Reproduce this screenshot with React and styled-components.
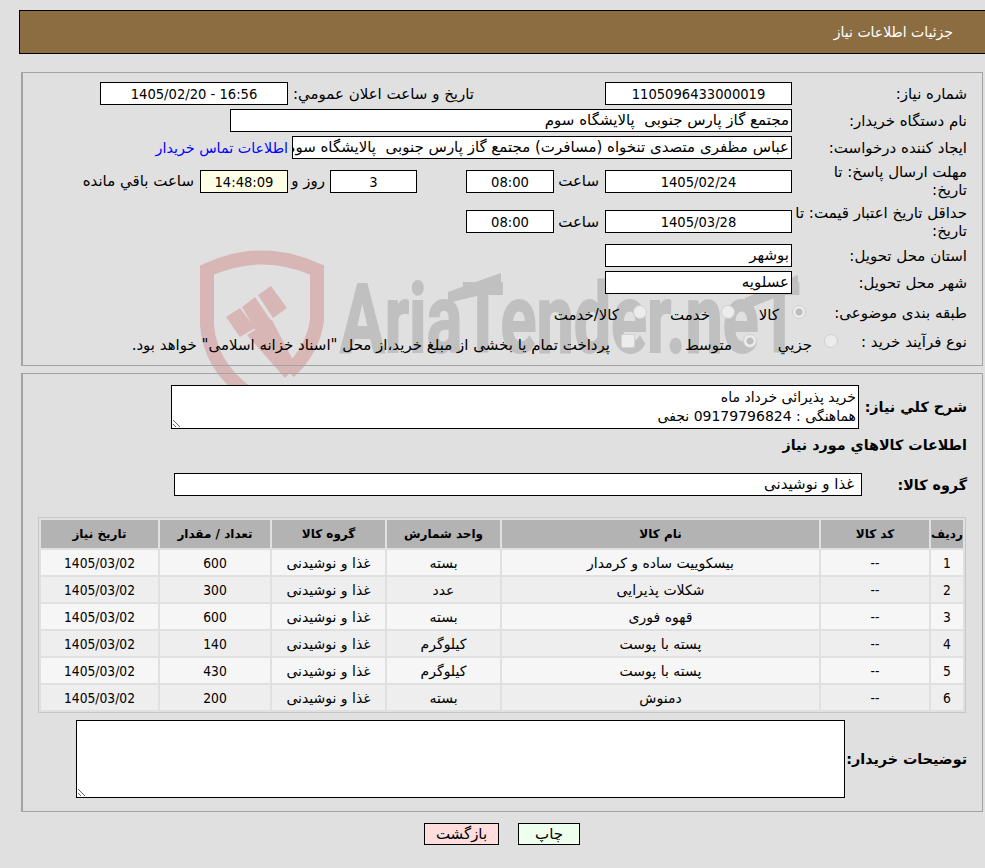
import React from 'react';
import styled, { createGlobalStyle } from 'styled-components';

const GlobalStyle = createGlobalStyle`
  html, body {
    margin: 0;
    padding: 0;
    background: #e0e0e0;
  }
  body {
    font-family: "DejaVu Sans", Tahoma, sans-serif;
    font-size: 15px;
    color: #000;
  }
`;

const Page = styled.div`
  position: relative;
  width: 985px;
  height: 868px;
  overflow: hidden;
  direction: rtl;
  padding-top: 10px;
  box-sizing: border-box;
`;

const Watermark = styled.svg`
  position: absolute;
  left: 190px;
  top: 240px;
  z-index: 0;
`;

const Header = styled.div`
  position: relative;
  z-index: 1;
  box-sizing: border-box;
  width: 970px;
  height: 44px;
  margin-right: -4px;
  padding-right: 35px;
  display: flex;
  align-items: center;
  background: #8c6d42;
  border: 1px solid #000;
  color: #fff;
  font-size: 14px;
`;

const Panel = styled.div`
  position: relative;
  z-index: 1;
  box-sizing: border-box;
  width: 962px;
  margin-right: 2px;
  margin-top: ${(p) => p.$top}px;
  height: ${(p) => p.$h}px;
  padding: ${(p) => p.$pad};
  border: 1px solid #a3a3a3;
  border-left-width: 2px;
  display: flex;
  flex-direction: column;
`;

const Row = styled.div`
  display: flex;
  align-items: center;
  height: ${(p) => p.$h || 23}px;
  margin-top: ${(p) => p.$top || 0}px;
  margin-bottom: 4px;
  flex-shrink: 0;
`;

const Label = styled.div`
  width: ${(p) => p.$w || 175}px;
  flex-shrink: 0;
  font-size: ${(p) => (p.$bold ? 14.3 : 15)}px;
  line-height: 18px;
  font-weight: ${(p) => (p.$bold ? 700 : 400)};
`;

const Field = styled.div`
  box-sizing: border-box;
  width: ${(p) => p.$w}px;
  height: 23px;
  flex-shrink: 0;
  margin-right: ${(p) => p.$gap || 0}px;
  padding: 0 2px;
  background: ${(p) => p.$bg || '#fff'};
  border: 1px solid #000;
  font-size: 15px;
  line-height: 21px;
  text-align: right;
  white-space: pre;
  overflow: hidden;
`;

const NumField = styled(Field)`
  direction: ltr;
  text-align: center;
  font-family: "DejaVu Sans Condensed", "DejaVu Sans", sans-serif;
  font-size: 14.6px;
`;

const Text = styled.span`
  flex-shrink: 0;
  width: ${(p) => (p.$w ? `${p.$w}px` : 'auto')};
  margin-right: ${(p) => p.$gap || 0}px;
  margin-top: ${(p) => p.$drop || 0}px;
  font-size: 15px;
  white-space: pre;
`;

const ContactLink = styled.a`
  margin-right: 4px;
  color: #0000ff;
  font-size: 14.3px;
  white-space: nowrap;
`;

const Radio = styled.span`
  box-sizing: border-box;
  width: 14px;
  height: 14px;
  flex-shrink: 0;
  margin-top: -2px;
  border-radius: 50%;
  background: ${(p) => (p.$on ? 'radial-gradient(circle, #bdbdbd 0 3px, #ececec 4px)' : '#ececec')};
  border: 1px solid #cfcfcf;
`;

const Check = styled.span`
  box-sizing: border-box;
  width: 14px;
  height: 14px;
  flex-shrink: 0;
  margin-top: -2px;
  border-radius: 2px;
  background: #ececec;
  border: 1px solid #d2d2d2;
`;

const Area = styled.textarea`
  box-sizing: border-box;
  display: block;
  width: ${(p) => p.$w}px;
  height: ${(p) => p.$h}px;
  flex-shrink: 0;
  margin: 0;
  padding: 2px;
  border: 1px solid #000;
  border-radius: 0;
  outline: none;
  background: #fff;
  color: #000;
  font-family: "DejaVu Sans", Tahoma, sans-serif;
  font-size: 14px;
  line-height: 19px;
`;

const GoodsTable = styled.table`
  box-sizing: border-box;
  width: 928px;
  margin-right: 1px;
  margin-top: 17px;
  table-layout: fixed;
  border-collapse: separate;
  border-spacing: 2px;
  border: 1px solid #c6c6c6;
  font-size: 14px;
  flex-shrink: 0;

  th {
    height: 28px;
    padding: 0;
    background: #b3b3b3;
    font-size: 12px;
    font-weight: 700;
  }

  td {
    height: 25px;
    padding: 0;
    text-align: center;
    white-space: nowrap;
  }

  tbody tr:nth-child(odd) td {
    background: #f6f6f6;
  }

  tbody tr:nth-child(even) td {
    background: #eeeeee;
  }
`;

const Num = styled.span`
  font-family: "DejaVu Sans Condensed", "DejaVu Sans", sans-serif;
  font-size: 13.7px;
`;

const Actions = styled.div`
  position: relative;
  z-index: 1;
  width: 962px;
  margin-right: 2px;
  margin-top: 11px;
  display: flex;
  justify-content: center;
  gap: 19px;
`;

const Button = styled.button`
  box-sizing: border-box;
  width: ${(p) => p.$w}px;
  height: 22px;
  padding: 0;
  background: ${(p) => p.$bg};
  border: 1px solid #000;
  color: #000;
  font-family: "DejaVu Sans", Tahoma, sans-serif;
  font-size: 15px;
`;

const goods = [
  ['1', '--', 'بیسکوییت ساده و کرمدار', 'بسته', '600'],
  ['2', '--', 'شکلات پذیرایی', 'عدد', '300'],
  ['3', '--', 'قهوه فوری', 'بسته', '600'],
  ['4', '--', 'پسته با پوست', 'کیلوگرم', '140'],
  ['5', '--', 'پسته با پوست', 'کیلوگرم', '430'],
  ['6', '--', 'دمنوش', 'بسته', '200'],
];

const widths = [32, 108, 317, 113, 113, 110, 117];

const Logo = () => (
  <Watermark width="620" height="200" viewBox="190 240 620 200">
    <g fill="#d9b6b6">
      <path
        d="M246 392 Q210 365 207 325 L207 270 Q262 245 317 270 L317 320 Q313 350 289 372"
        fill="none"
        stroke="#d9b6b6"
        strokeWidth="14"
      />
      <polygon points="247,335 272,320 296,366 285,378" />
      <polygon points="226,317 240,308 255,328 240,337" />
      <polygon points="242,307 255,297 272,322 257,333" />
      <polygon points="258,295 271,286 287,308 273,318" />
    </g>
    <text
      x="340"
      y="352"
      direction="ltr"
      fill="#c0c0c0"
      stroke="#c0c0c0"
      strokeWidth="2"
      fontFamily="Roboto, sans-serif"
      fontWeight="700"
      fontSize="96"
      textLength="460"
      lengthAdjust="spacingAndGlyphs"
    >
      AriaTender.neT
    </text>
    <g fill="#c0c0c0">
      <polygon points="448,292 501,273 501,290 448,303" />
      <polygon points="745,298 798,275 798,288 745,310" />
    </g>
  </Watermark>
);

export default function App() {
  return (
    <Page>
      <GlobalStyle />
      <Logo />
      <Header>جزئیات اطلاعات نیاز</Header>

      <Panel $top={18} $h={294} $pad="9px 15px 0 0">
        <Row>
          <Label>شماره نیاز:</Label>
          <NumField $w={187}>1105096433000019</NumField>
          <Text $gap={131} $w={186}>تاریخ و ساعت اعلان عمومي:</Text>
          <NumField $w={188}>1405/02/20 - 16:56</NumField>
        </Row>
        <Row>
          <Label>نام دستگاه خریدار:</Label>
          <Field $w={562}>مجتمع گاز پارس جنوبی  پالایشگاه سوم</Field>
        </Row>
        <Row>
          <Label>ایجاد کننده درخواست:</Label>
          <Field $w={500}>عباس مظفری متصدی تنخواه (مسافرت) مجتمع گاز پارس جنوبی  پالایشگاه سوم</Field>
          <ContactLink>اطلاعات تماس خریدار</ContactLink>
        </Row>
        <Row $h={36}>
          <Label>مهلت ارسال پاسخ: تا<br />تاریخ:</Label>
          <NumField $w={187}>1405/02/24</NumField>
          <Text $gap={6} $w={45}>ساعت</Text>
          <NumField $w={88}>08:00</NumField>
          <NumField $w={87} $gap={49}>3</NumField>
          <Text $gap={5} $w={37}>روز و</Text>
          <NumField $w={88} $bg="#ffffe6">14:48:09</NumField>
          <Text $gap={6}>ساعت باقي مانده</Text>
        </Row>
        <Row $h={37}>
          <Label>حداقل تاریخ اعتبار قیمت: تا تاریخ:</Label>
          <NumField $w={187}>1405/03/28</NumField>
          <Text $gap={6} $w={45}>ساعت</Text>
          <NumField $w={88}>08:00</NumField>
        </Row>
        <Row>
          <Label>استان محل تحویل:</Label>
          <Field $w={187}>بوشهر</Field>
        </Row>
        <Row>
          <Label>شهر محل تحویل:</Label>
          <Field $w={187}>عسلویه</Field>
        </Row>
        <Row $h={30}>
          <Label $w={161}>طبقه بندی موضوعی:</Label>
          <Radio $on />
          <Text $gap={13} $w={44} $drop={4}>کالا</Text>
          <Radio />
          <Text $gap={11} $w={63} $drop={4}>خدمت</Text>
          <Radio />
          <Text $gap={14} $drop={4}>کالا/خدمت</Text>
        </Row>
        <Row $h={20}>
          <Label $w={129}>نوع فرآیند خرید :</Label>
          <Radio />
          <Text $gap={12} $w={55} $drop={5}>جزيي</Text>
          <Radio $on />
          <Text $gap={11} $w={97} $drop={5}>متوسط</Text>
          <Check />
          <Text $gap={11} $drop={5}>پرداخت تمام یا بخشی از مبلغ خرید،از محل "اسناد خزانه اسلامی" خواهد بود.</Text>
        </Row>
      </Panel>

      <Panel $top={7} $h={439} $pad="11px 15px 0 0">
        <Row $h={44}>
          <Label $w={108} $bold>شرح کلي نیاز:</Label>
          <Area
            $w={688}
            $h={44}
            readOnly
            defaultValue={'خرید پذیرائی خرداد ماه\nهماهنگی : 09179796824 نجفی'}
          />
        </Row>
        <Row $h={24}>
          <Label $w={300} $bold>اطلاعات کالاهاي مورد نیاز</Label>
        </Row>
        <Row $top={12}>
          <Label $w={105} $bold>گروه کالا:</Label>
          <Field $w={688}> غذا و نوشیدنی</Field>
        </Row>
        <GoodsTable>
          <colgroup>
            {widths.map((w, i) => (
              <col key={i} width={w} />
            ))}
          </colgroup>
          <thead>
            <tr>
              <th>ردیف</th>
              <th>کد کالا</th>
              <th>نام کالا</th>
              <th>واحد شمارش</th>
              <th>گروه کالا</th>
              <th>تعداد / مقدار</th>
              <th>تاریخ نیاز</th>
            </tr>
          </thead>
          <tbody>
            {goods.map((g) => (
              <tr key={g[0]}>
                <td><Num>{g[0]}</Num></td>
                <td><Num>{g[1]}</Num></td>
                <td>{g[2]}</td>
                <td>{g[3]}</td>
                <td>غذا و نوشیدنی</td>
                <td><Num>{g[4]}</Num></td>
                <td><Num>1405/03/02</Num></td>
              </tr>
            ))}
          </tbody>
        </GoodsTable>
        <Row $h={78} $top={7}>
          <Label $w={122} $bold>توضیحات خریدار:</Label>
          <Area $w={769} $h={78} readOnly />
        </Row>
      </Panel>

      <Actions>
        <Button $w={62} $bg="#eeffee">چاپ</Button>
        <Button $w={75} $bg="#ffdddd">بازگشت</Button>
      </Actions>
    </Page>
  );
}
